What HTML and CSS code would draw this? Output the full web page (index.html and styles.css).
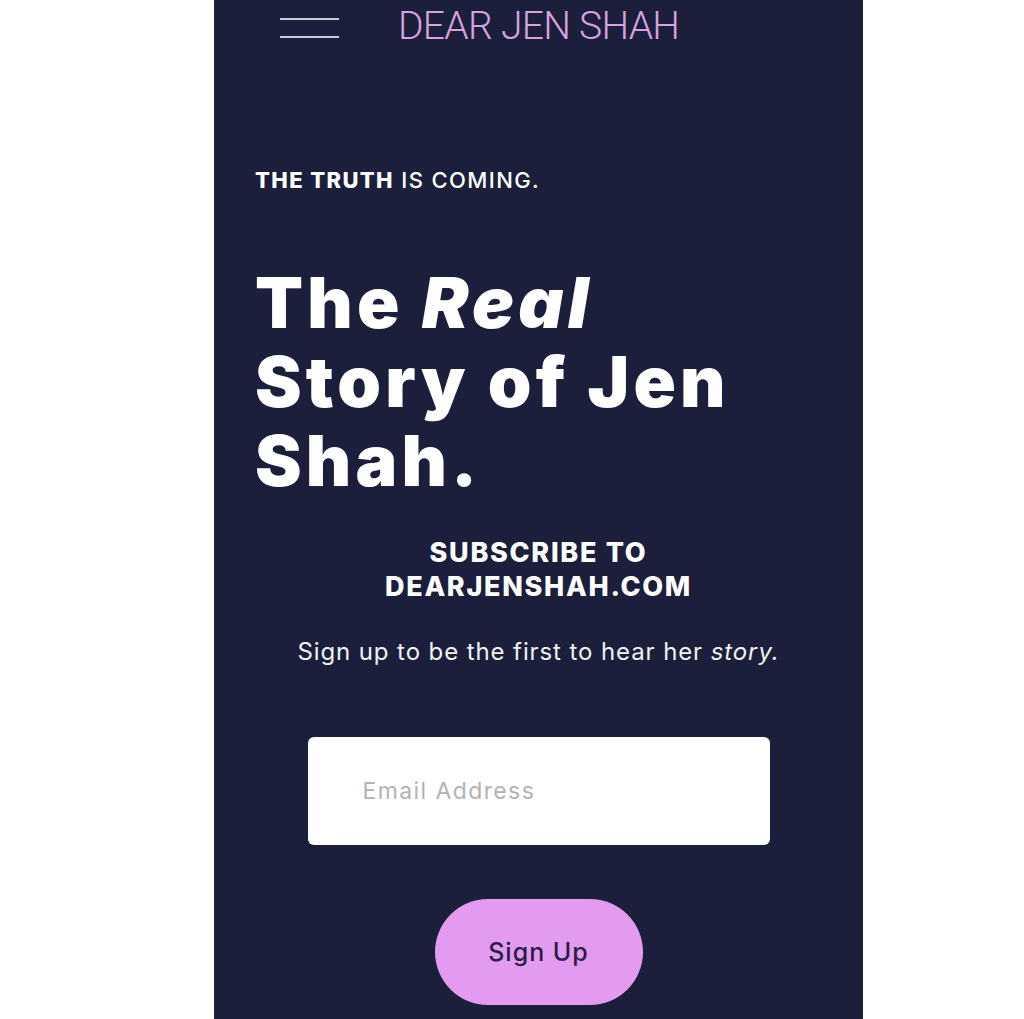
FILE: index.html
```html
<!DOCTYPE html>
<html lang="en">
<head>
<meta charset="utf-8">
<title>Dear Jen Shah</title>
<link rel="stylesheet" href="styles.css">
</head>
<body>
<main class="phone">
  <header class="topbar">
    <div class="burger"><span></span><span></span></div>
    <div class="brand">DEAR JEN SHAH</div>
  </header>
  <section class="hero">
    <p class="kicker"><b>THE TRUTH</b> IS COMING.</p>
    <h1 class="headline">The <em>Real</em><br>Story of Jen<br>Shah.</h1>
  </section>
  <section class="subscribe">
    <h2 class="sub-title">SUBSCRIBE TO<br>DEARJENSHAH.COM</h2>
    <p class="sub-text">Sign up to be the first to hear her <em>story.</em></p>
    <div class="email">Email Address</div>
    <button class="signup">Sign Up</button>
  </section>
</main>
</body>
</html>
```
FILE: styles.css
```css
html, body {
  margin: 0;
  padding: 0;
  background: #ffffff;
}
.phone {
  width: 649px;
  height: 1019px;
  margin-left: 214px;
  background: #1b1f3b;
  color: #ffffff;
  font-family: Inter, "Open Sans", sans-serif;
  overflow: hidden;
}
.topbar {
  display: flex;
  align-items: flex-start;
  height: 56px;
  padding-left: 66px;
}
.burger {
  display: flex;
  flex-direction: column;
  gap: 16px;
  width: 59px;
  margin-top: 18px;
}
.burger span {
  display: block;
  height: 2px;
  background: #c9c9d6;
}
.brand {
  margin-left: 59px;
  margin-top: 7px;
  font-family: Roboto, "Liberation Sans", Arial, sans-serif;
  font-weight: 300;
  font-size: 39px;
  line-height: 39px;
  color: #d7a2df;
  letter-spacing: -0.7px;
}
.hero {
  padding: 112px 0 0 41px;
}
.kicker {
  margin: 0;
  font-size: 22px;
  font-weight: 500;
  letter-spacing: 1.4px;
  line-height: 24px;
}
.kicker b {
  font-weight: 800;
}
.headline {
  margin: 71px 0 0;
  font-size: 70px;
  font-weight: 900;
  line-height: 79px;
  letter-spacing: 4.2px;
}
.headline em {
  font-style: italic;
}
.subscribe {
  display: flex;
  flex-direction: column;
  align-items: center;
  padding-top: 36px;
}
.sub-title {
  margin: 0;
  text-align: center;
  font-size: 27px;
  font-weight: 800;
  line-height: 34px;
  letter-spacing: 1.7px;
}
.sub-text {
  margin: 33px 0 0;
  font-size: 24px;
  line-height: 29px;
  font-weight: 400;
  letter-spacing: 0.9px;
  color: #f2f2f2;
}
.email {
  box-sizing: border-box;
  width: 462px;
  height: 108px;
  margin-top: 71px;
  padding-left: 55px;
  display: flex;
  align-items: center;
  background: #ffffff;
  border-radius: 6px;
  color: #b3b3b3;
  font-size: 23px;
  letter-spacing: 1.4px;
}
.signup {
  width: 208px;
  height: 106px;
  margin-top: 54px;
  border: none;
  border-radius: 53px;
  background: #e39bf0;
  color: #2b1d45;
  font-family: Inter, "Open Sans", sans-serif;
  font-size: 25px;
  font-weight: 500;
  letter-spacing: 1px;
}
```
